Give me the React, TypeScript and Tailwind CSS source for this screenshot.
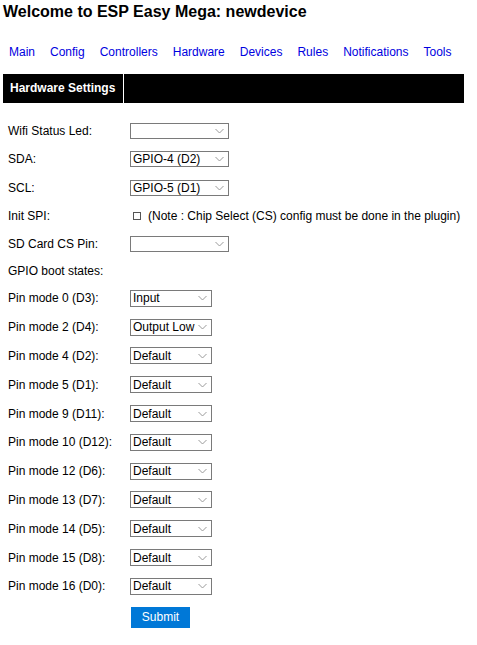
import React from "react";

const Chevron = () => (
  <svg width="9" height="6" viewBox="0 0 9 6" className="shrink-0">
    <path d="M0.5 1 L4.5 5 L8.5 1" fill="none" stroke="#9a9a9a" strokeWidth="1" />
  </svg>
);

const Select = ({ value, wide }: { value: string; wide?: boolean }) => (
  <div
    className={`flex items-center justify-between border border-[#7a7a7a] bg-white pl-[2px] pr-[4px] ${
      wide ? "w-[99px] h-[16px]" : "w-[82px] h-[17px]"
    }`}
  >
    <span className="text-[12px] leading-[14px] text-black whitespace-nowrap">{value}</span>
    <Chevron />
  </div>
);

const Row = ({ label, h, children }: { label: string; h: string; children?: React.ReactNode }) => (
  <div className={`flex items-center ${h}`}>
    <div className="w-[127px] shrink-0 pl-[5px] text-[12px] leading-[14px] text-black whitespace-nowrap">{label}</div>
    <div className="flex items-center">{children}</div>
  </div>
);

const pins: [string, string][] = [
  ["Pin mode 0 (D3):", "Input"],
  ["Pin mode 2 (D4):", "Output Low"],
  ["Pin mode 4 (D2):", "Default"],
  ["Pin mode 5 (D1):", "Default"],
  ["Pin mode 9 (D11):", "Default"],
  ["Pin mode 10 (D12):", "Default"],
  ["Pin mode 12 (D6):", "Default"],
  ["Pin mode 13 (D7):", "Default"],
  ["Pin mode 14 (D5):", "Default"],
  ["Pin mode 15 (D8):", "Default"],
  ["Pin mode 16 (D0):", "Default"],
];

const links = ["Main", "Config", "Controllers", "Hardware", "Devices", "Rules", "Notifications", "Tools"];

export default function App() {
  return (
    <div
      className="w-[477px] h-[645px] bg-white pl-[3px] pt-[2px] text-black"
      style={{ fontFamily: '"Liberation Sans", Arial, sans-serif' }}
    >
      <div className="text-[16px] leading-[20px] font-bold h-[20px] whitespace-nowrap">
        Welcome to ESP Easy Mega: newdevice
      </div>
      <div className="mt-[23px] flex gap-[15px] pl-[6px] h-[14px] text-[12px] leading-[14px]">
        {links.map((l) => (
          <span key={l} className="text-[#0000e0]">
            {l}
          </span>
        ))}
      </div>
      <div className="mt-[15px] flex w-[461px] h-[29px]">
        <div className="w-[120px] bg-black text-white font-bold text-[12px] leading-[29px] pl-[7px] whitespace-nowrap">
          Hardware Settings
        </div>
        <div className="w-[1px] bg-white" />
        <div className="flex-1 bg-black" />
      </div>
      <div className="mt-[14px] flex flex-col">
        <Row label="Wifi Status Led:" h="h-[28px]">
          <Select value="" wide />
        </Row>
        <Row label="SDA:" h="h-[28px]">
          <Select value="GPIO-4 (D2)" wide />
        </Row>
        <Row label="SCL:" h="h-[29px]">
          <Select value="GPIO-5 (D1)" wide />
        </Row>
        <Row label="Init SPI:" h="h-[28px]">
          <div className="flex items-center">
            <div className="ml-[3px] w-[8px] h-[8px] border border-[#555555] bg-white" />
            <span className="ml-[7px] text-[12px] leading-[14px] whitespace-nowrap">
              (Note : Chip Select (CS) config must be done in the plugin)
            </span>
          </div>
        </Row>
        <Row label="SD Card CS Pin:" h="h-[28px]">
          <Select value="" wide />
        </Row>
        <Row label="GPIO boot states:" h="h-[26px]" />
        {pins.map(([l, v]) => (
          <Row key={l} label={l} h="h-[28.8px]">
            <Select value={v} />
          </Row>
        ))}
      </div>
      <div className="mt-[6px] pl-[128px]">
        <div className="w-[59px] h-[21px] bg-[#0078d7] text-white text-[12px] leading-[21px] text-center">
          Submit
        </div>
      </div>
    </div>
  );
}
